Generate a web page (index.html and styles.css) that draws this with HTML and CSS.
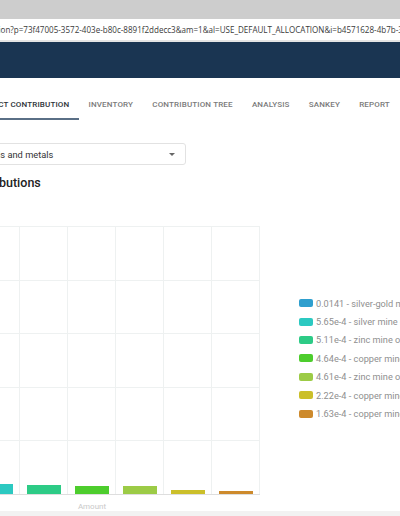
FILE: index.html
```html
<!DOCTYPE html>
<html lang="en">
<head>
    <meta charset="UTF-8">
    <meta name="viewport" content="width=device-width, initial-scale=1.0">
    <title>Contribution</title>
    <link rel="stylesheet" href="styles.css">
</head>

<body>
    <div class="browser-top"></div>
    <div class="address">
        <span class="url">contribution?p=73f47005-3572-403e-b80c-8891f2ddecc3&amp;am=1&amp;al=USE_DEFAULT_ALLOCATION&amp;i=b4571628-4b7b-3e4b-a3c1-0f2c6d3e9a17</span>
    </div>
    <header class="appbar"></header>

    <nav class="tabs">
        <div class="tab active">DIRECT CONTRIBUTION</div>
        <div class="tab">INVENTORY</div>
        <div class="tab">CONTRIBUTION TREE</div>
        <div class="tab">ANALYSIS</div>
        <div class="tab">SANKEY</div>
        <div class="tab">REPORT</div>
    </nav>

    <div class="select">
        <span class="select-label">Resource use, minerals and metals</span>
        <span class="caret"></span>
    </div>

    <h2 class="title">Direct contributions</h2>

    <div class="chart">
        <div class="plot-wrap">
            <div class="plot">
                <div class="col"><div class="bar c1" style="height:252px"></div></div>
                <div class="col"><div class="bar c2" style="height:10px"></div></div>
                <div class="col"><div class="bar c3" style="height:9px"></div></div>
                <div class="col"><div class="bar c4" style="height:8px"></div></div>
                <div class="col"><div class="bar c5" style="height:8px"></div></div>
                <div class="col"><div class="bar c6" style="height:4px"></div></div>
                <div class="col"><div class="bar c7" style="height:3px"></div></div>
            </div>
            <div class="axis-name">Amount</div>
        </div>

        <ul class="legend">
            <li><span class="swatch c1"></span>0.0141 - silver-gold mine operation</li>
            <li><span class="swatch c2"></span>5.65e-4 - silver mine operation</li>
            <li><span class="swatch c3"></span>5.11e-4 - zinc mine operation</li>
            <li><span class="swatch c4"></span>4.64e-4 - copper mine operation</li>
            <li><span class="swatch c5"></span>4.61e-4 - zinc mine operation</li>
            <li><span class="swatch c6"></span>2.22e-4 - copper mine operation</li>
            <li><span class="swatch c7"></span>1.63e-4 - copper mine operation</li>
        </ul>
    </div>

    <div class="page-bottom"></div>
</body>
</html>
```

FILE: styles.css
```css
* {
    box-sizing: border-box;
}

body {
    margin: 0;
    width: 400px;
    height: 516px;
    overflow: hidden;
    background-color: #fff;
    font-family: Roboto, "Liberation Sans", sans-serif;
}

/* browser chrome */
.browser-top {
    height: 19px;
    background-color: #cdcdcd;
}

.address {
    height: 23px;
    display: flex;
    align-items: center;
    overflow: hidden;
    white-space: nowrap;
    background-color: #fff;
    border-bottom: 2px solid #e4e4e4;
}

.url {
    margin-left: -36px;
    font-family: "Open Sans", sans-serif;
    font-size: 8.05px;
    color: #3a3a3a;
}

.appbar {
    height: 36px;
    background-color: #1a3552;
}

/* tabs */
.tabs {
    display: flex;
    margin-top: 13px;
    margin-left: -29px;
    white-space: nowrap;
}

.tab {
    height: 29px;
    padding: 0 9.6px;
    display: flex;
    align-items: center;
    font-size: 8px;
    font-weight: 500;
    letter-spacing: 0.15px;
    color: #7a7a7a;
    border-bottom: 2px solid transparent;
}

.tab.active {
    color: #2c3238;
    border-bottom-color: #5a6f86;
}

/* select */
.select {
    width: 285.5px;
    height: 22px;
    margin: 23px 0 0 -99.5px;
    padding: 0 8px;
    display: flex;
    align-items: center;
    justify-content: space-between;
    border: 1px solid #e2e2e2;
    border-radius: 3px;
    white-space: nowrap;
}

.select-label {
    font-size: 9.3px;
    color: #333;
}

.caret {
    width: 0;
    height: 0;
    margin-right: 2px;
    border-left: 3px solid transparent;
    border-right: 3px solid transparent;
    border-top: 3px solid #666;
}

.title {
    margin: 10px 0 0 -69.5px;
    font-size: 12.5px;
    font-weight: 500;
    line-height: 16px;
    color: #222;
    white-space: nowrap;
}

/* chart */
.chart {
    display: flex;
    margin-top: 35px;
}

.plot-wrap {
    margin-left: -76px;
    flex-shrink: 0;
}

.plot {
    width: 336px;
    height: 269px;
    display: flex;
    border-bottom: 1px solid #dedede;
    background-image: repeating-linear-gradient(to bottom, #eef1f1 0, #eef1f1 1px, transparent 1px, transparent 53.6px);
}

.col {
    width: 48px;
    display: flex;
    align-items: flex-end;
    justify-content: center;
    border-right: 1px solid #eef1f1;
}

.bar {
    width: 34px;
}

.axis-name {
    margin-top: 7px;
    text-align: center;
    font-size: 8px;
    color: #c9c9c9;
}

.legend {
    list-style: none;
    margin: 68px 0 0 39px;
    padding: 0;
    white-space: nowrap;
}

.legend li {
    height: 18.4px;
    display: flex;
    align-items: center;
    font-size: 9.2px;
    color: #8f8f8f;
}

.swatch {
    width: 14px;
    height: 8px;
    margin-right: 3px;
    border-radius: 2px;
    flex-shrink: 0;
}

.c1 { background-color: #2f9fce; }
.c2 { background-color: #2cc9c1; }
.c3 { background-color: #2dcb86; }
.c4 { background-color: #4dcd2d; }
.c5 { background-color: #9ccb46; }
.c6 { background-color: #cbbf2a; }
.c7 { background-color: #cd8a2c; }

.page-bottom {
    height: 20px;
    background-color: #f2f2f2;
}
```
